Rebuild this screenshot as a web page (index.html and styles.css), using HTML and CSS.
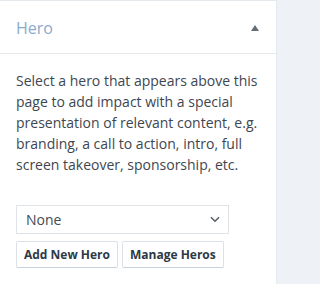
FILE: index.html
```html
<!DOCTYPE html>
<html>
<head>
<meta charset="utf-8">
<link rel="stylesheet" href="styles.css">
</head>
<body>
<div class="panel">
  <div class="panel-header">
    <span class="title">Hero</span>
    <span class="toggle"></span>
  </div>
  <div class="panel-body">
    <p class="desc">Select a hero that appears above this page to add impact with a special presentation of relevant content, e.g. branding, a call to action, intro, full screen takeover, sponsorship, etc.</p>
    <div class="select">
      <span>None</span>
      <svg width="10" height="7" viewBox="0 0 10 7"><path d="M1 1.2 L5 5.2 L9 1.2" fill="none" stroke="#555c63" stroke-width="1.5"/></svg>
    </div>
    <div class="actions">
      <button class="btn">Add New Hero</button>
      <button class="btn">Manage Heros</button>
    </div>
  </div>
</div>
</body>
</html>
```
FILE: styles.css
```css
html, body {
  margin: 0;
  padding: 0;
  background: #eef2f6;
  font-family: "Open Sans", sans-serif;
}
.panel {
  width: 277px;
  height: 284px;
  box-sizing: border-box;
  overflow: hidden;
  background: #fff;
  border-top: 1px solid #e4e9ee;
  border-right: 1px solid #e4e9ee;
}
.panel-header {
  height: 52px;
  border-bottom: 1px solid #e4e9ee;
  display: flex;
  align-items: center;
  justify-content: space-between;
  padding: 0 17px 0 16px;
}
.title {
  font-size: 16px;
  color: #8aabcc;
  padding-top: 2px;
}
.toggle {
  width: 0;
  height: 0;
  border-left: 4px solid transparent;
  border-right: 4px solid transparent;
  border-bottom: 6px solid #656d77;
  margin-top: 2px;
}
.panel-body {
  padding: 16px 16px 0;
}
.desc {
  margin: 0;
  font-size: 14px;
  line-height: 21px;
  color: #3e4650;
}
.select {
  margin-top: 30px;
  width: 213px;
  height: 29px;
  box-sizing: border-box;
  border: 1px solid #dfe4e9;
  display: flex;
  align-items: center;
  justify-content: space-between;
  padding: 0 8px 0 9px;
  font-size: 14px;
  color: #444b53;
}
.actions {
  display: flex;
  gap: 4px;
  margin-top: 7px;
}
.btn {
  height: 27px;
  box-sizing: border-box;
  background: #fff;
  border: 1px solid #dbe1e7;
  border-bottom-color: #c9d1da;
  border-radius: 2px;
  font-family: "Open Sans", sans-serif;
  font-weight: 700;
  font-size: 12px;
  color: #2d3945;
  padding: 0 7px;
}
```
